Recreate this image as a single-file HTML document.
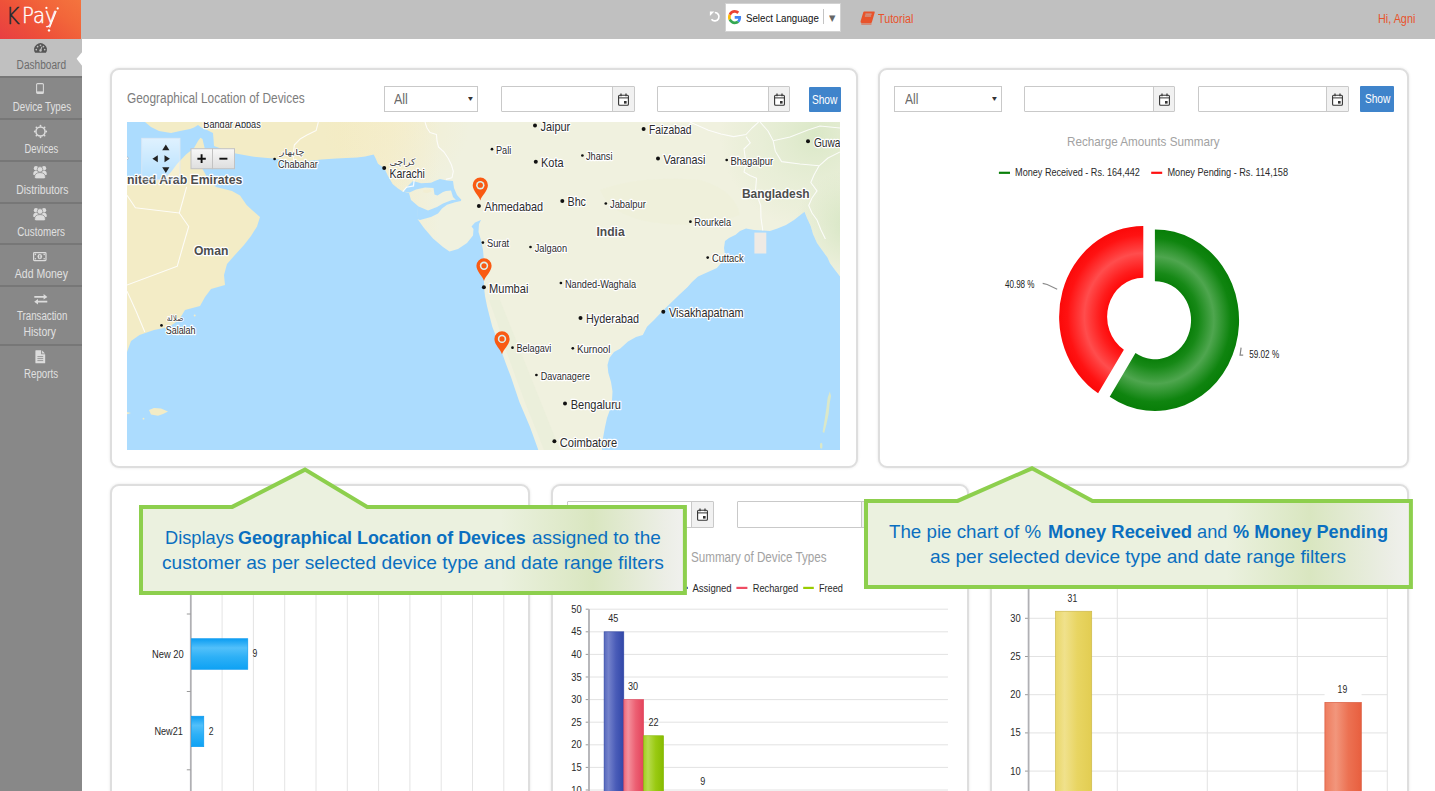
<!DOCTYPE html>
<html lang="en"><head><meta charset="utf-8"><title>KPay Dashboard</title>
<style>
*{box-sizing:border-box}
html,body{margin:0;padding:0}
body{width:1435px;height:791px;overflow:hidden;background:#fff;position:relative;font-family:"Liberation Sans",sans-serif}
.t{position:absolute;white-space:nowrap;display:block}
.abs{position:absolute}
#topbar{position:absolute;left:0;top:0;width:1435px;height:39px;background:#c0c0c0}
#logo{position:absolute;left:0;top:0;width:81px;height:39px;background:linear-gradient(38deg,#e83e42 0%,#ee5139 38%,#f2663a 70%,#f4743e 100%)}
#sidebar{position:absolute;left:0;top:39px;width:81.5px;height:752px;background:#888}
.nav{position:absolute;left:0;width:81.5px;border-top:2px solid #777}
.nav.active{background:#c0c0c0;border:0}
.card{position:absolute;border:2px solid #dedede;border-radius:9px;background:#fff;box-shadow:0 0 3px rgba(0,0,0,.10)}
.inp{position:absolute;height:26px;border:1px solid #c9c9c9;background:#fff;border-radius:1px}
  .inp .cal{position:absolute;right:0;top:0;bottom:0;width:22px;background:#f1f1f1;border-left:1px solid #c9c9c9}
.sel{position:absolute;height:26px;border:1px solid #c9c9c9;background:#fff}
.btn{position:absolute;background:#3f84cb;border-radius:1px}
svg{position:absolute;overflow:visible}
</style></head><body>

<div id="topbar">
<div id="logo">
<span class="t" style='left:5.9px;top:4.77px;font:200 22.6px/22.6px "DejaVu Sans",sans-serif;color:#1d2a31;transform:scaleX(0.918);transform-origin:0 0;-webkit-text-stroke:0.45px #1d2a31;'>K</span>
<span class="t" style='left:22px;top:5.28px;font:200 22px/22px "DejaVu Sans",sans-serif;color:#fff;transform:scaleX(0.897);transform-origin:0 0;-webkit-text-stroke:0.4px #fff;'>Pay</span>
<svg width="81" height="39" viewBox="0 0 81 39"><g fill="#fff"><circle cx="46.4" cy="7.9" r="1.1"/><circle cx="57.7" cy="8.4" r="1.1"/><circle cx="49" cy="30.4" r="1.2"/></g><path d="M56.2 11 L49.6 27.6" stroke="#fff" stroke-width="1.1" fill="none"/></svg>
</div>
<svg style="left:708px;top:10px" width="14" height="14" viewBox="0 0 14 14"><path d="M6.80 2.50 A4.2 4.2 0 1 1 3.49 9.29" fill="none" stroke="#fff" stroke-width="1.7"/><path d="M1.9 1.4 L6.3 1.4 L1.9 5.9 Z" fill="#fff"/></svg>
<div class="abs" style="left:724.9px;top:3.1px;width:116px;height:29px;background:#fff;border:1px solid #d2d2d2">
<svg style="left:1.9px;top:5.9px" width="13.4" height="14.3" viewBox="0 0 48 48" preserveAspectRatio="none"><path fill="#EA4335" d="M24 9.5c3.54 0 6.71 1.22 9.21 3.6l6.85-6.85C35.9 2.38 30.47 0 24 0 14.62 0 6.51 5.38 2.56 13.22l7.98 6.19C12.43 13.72 17.74 9.5 24 9.5z"/><path fill="#4285F4" d="M46.98 24.55c0-1.57-.15-3.09-.38-4.55H24v9.02h12.94c-.58 2.96-2.26 5.48-4.78 7.18l7.73 6c4.51-4.18 7.09-10.36 7.09-17.65z"/><path fill="#FBBC05" d="M10.53 28.59c-.48-1.45-.76-2.99-.76-4.59s.27-3.14.76-4.59l-7.98-6.19C.92 16.46 0 20.12 0 24c0 3.88.92 7.54 2.56 10.78l7.97-6.19z"/><path fill="#34A853" d="M24 48c6.48 0 11.93-2.13 15.89-5.81l-7.73-6c-2.15 1.45-4.92 2.3-8.16 2.3-6.26 0-11.57-4.22-13.47-9.91l-7.98 6.19C6.51 42.62 14.62 48 24 48z"/></svg>
<span class="t" style='left:20.3px;top:8.77px;font:400 11.5px/11.5px "Liberation Sans",sans-serif;color:#111;transform:scaleX(0.843);transform-origin:0 0;'>Select Language</span>
<div class="abs" style="left:97.4px;top:5.4px;width:1px;height:15px;background:#c4c4c4"></div>
<span class="t" style='left:103.3px;top:9.9px;font:400 8.5px/8.5px "DejaVu Sans",sans-serif;color:#666;transform:scaleX(0.979);transform-origin:0 0;'>▼</span>
</div>
<svg style="left:859.5px;top:10.5px" width="15" height="14.5" viewBox="0 0 15 14.5"><g fill="#e8532b"><path d="M4.2 0.6 L14.2 0.6 Q14.9 0.7 14.7 1.5 L11.9 11.2 Q11.7 11.9 10.9 11.9 L1.6 11.9 Q0.2 11.7 0.6 10.2 L3.2 1.4 Q3.5 0.6 4.2 0.6 Z"/><path d="M1.2 12.4 L11.6 12.4 L11.4 13.6 L1.8 13.6 Q0.7 13.4 1.2 12.4 Z"/></g><path d="M5.4 3.1 L11.6 3.1 M4.9 5 L11.1 5" stroke="#c0c0c0" stroke-width="0.9"/></svg>
<span class="t" style='left:878.4px;top:12.82px;font:400 12.5px/12.5px "Liberation Sans",sans-serif;color:#e8532b;transform:scaleX(0.859);transform-origin:0 0;'>Tutorial</span>
<span class="t" style='left:1378.2px;top:12.92px;font:400 12.5px/12.5px "Liberation Sans",sans-serif;color:#e8532b;transform:scaleX(0.866);transform-origin:0 0;'>Hi, Agni</span>
</div>
<div id="sidebar">
<div class="nav active" style="top:0px;height:37.2px"><svg style="left:33.85px;top:4.1px" width="13" height="9.8" viewBox="0 0 13 9.8"><path d="M1.07 9.7 A6.3 6.3 0 1 1 11.93 9.7 Z" fill="#555"/><g fill="#c0c0c0"><circle cx="2.3" cy="6.6" r="0.85"/><circle cx="3.6" cy="3.6" r="0.85"/><circle cx="6.5" cy="2.3" r="0.85"/><circle cx="9.4" cy="3.6" r="0.85"/><circle cx="10.7" cy="6.6" r="0.85"/><path d="M6 7.2 L7.5 3.6 L8.3 3.9 L7.2 7.6 Z"/><circle cx="6.5" cy="7.6" r="1.25"/></g></svg><span class="t" style='left:12.1px;top:19.94px;font:400 12px/12px "Liberation Sans",sans-serif;color:#6c6c6c;transform:scaleX(0.843);transform-origin:50% 0;'>Dashboard</span></div>
<svg style="left:75.5px;top:11.5px" width="7" height="16" viewBox="0 0 7 16"><path d="M7 0 L0.6 7.8 L7 16 Z" fill="#fff"/></svg>
<div class="nav" style="top:37.2px;height:41.8px"><svg style="left:36.1px;top:5px" width="8" height="11" viewBox="0 0 8 11"><rect x="0.6" y="0.6" width="6.8" height="9.8" rx="1" fill="none" stroke="#d9d9d9" stroke-width="1.05"/><rect x="0.8" y="8.4" width="6.4" height="1.8" fill="#d9d9d9"/></svg><span class="t" style='left:5.64px;top:22.54px;font:400 12px/12px "Liberation Sans",sans-serif;color:#e0e0e0;transform:scaleX(0.812);transform-origin:50% 0;'>Device Types</span></div>
<div class="nav" style="top:79px;height:41.8px"><svg style="left:33.9px;top:4.6px" width="13" height="13" viewBox="0 0 13 13"><circle cx="6.5" cy="6.5" r="4.55" fill="none" stroke="#dcdcdc" stroke-width="1.5"/><circle cx="12.25" cy="6.5" r="0.9" fill="#dcdcdc"/><circle cx="10.57" cy="10.57" r="0.9" fill="#dcdcdc"/><circle cx="6.5" cy="12.25" r="0.9" fill="#dcdcdc"/><circle cx="2.43" cy="10.57" r="0.9" fill="#dcdcdc"/><circle cx="0.75" cy="6.5" r="0.9" fill="#dcdcdc"/><circle cx="2.43" cy="2.43" r="0.9" fill="#dcdcdc"/><circle cx="6.5" cy="0.75" r="0.9" fill="#dcdcdc"/><circle cx="10.57" cy="2.43" r="0.9" fill="#dcdcdc"/></svg><span class="t" style='left:20.26px;top:22.74px;font:400 12px/12px "Liberation Sans",sans-serif;color:#e0e0e0;transform:scaleX(0.787);transform-origin:50% 0;'>Devices</span></div>
<div class="nav" style="top:120.8px;height:41.7px"><svg style="left:33.2px;top:3.4px" width="14" height="14" viewBox="0 0 14 14"><g fill="#dcdcdc"><circle cx="3" cy="3.2" r="2.2"/><circle cx="11" cy="3.2" r="2.2"/><path d="M0.2 9.6 Q0 5.8 3 5.8 Q4.8 5.8 5.4 7 L5.4 10 L0.8 10 Z"/><path d="M13.8 9.6 Q14 5.8 11 5.8 Q9.2 5.8 8.6 7 L8.6 10 L13.2 10 Z"/></g><g fill="#dcdcdc" stroke="#888" stroke-width="0.7"><circle cx="7" cy="4.4" r="2.8"/><path d="M1.6 12.6 Q1.4 7.6 7 7.6 Q12.6 7.6 12.4 12.6 Q12.2 13.7 11 13.7 L3 13.7 Q1.8 13.7 1.6 12.6 Z"/></g></svg><span class="t" style='left:11.61px;top:22.64px;font:400 12px/12px "Liberation Sans",sans-serif;color:#e0e0e0;transform:scaleX(0.859);transform-origin:50% 0;'>Distributors</span></div>
<div class="nav" style="top:162.5px;height:41.8px"><svg style="left:32.9px;top:3.5px" width="14" height="14" viewBox="0 0 14 14"><g fill="#dcdcdc"><circle cx="3" cy="3.2" r="2.2"/><circle cx="11" cy="3.2" r="2.2"/><path d="M0.2 9.6 Q0 5.8 3 5.8 Q4.8 5.8 5.4 7 L5.4 10 L0.8 10 Z"/><path d="M13.8 9.6 Q14 5.8 11 5.8 Q9.2 5.8 8.6 7 L8.6 10 L13.2 10 Z"/></g><g fill="#dcdcdc" stroke="#888" stroke-width="0.7"><circle cx="7" cy="4.4" r="2.8"/><path d="M1.6 12.6 Q1.4 7.6 7 7.6 Q12.6 7.6 12.4 12.6 Q12.2 13.7 11 13.7 L3 13.7 Q1.8 13.7 1.6 12.6 Z"/></g></svg><span class="t" style='left:12.14px;top:22.84px;font:400 12px/12px "Liberation Sans",sans-serif;color:#e0e0e0;transform:scaleX(0.822);transform-origin:50% 0;'>Customers</span></div>
<div class="nav" style="top:204.3px;height:41.7px"><svg style="left:33.1px;top:6.9px" width="13.6" height="9.2" viewBox="0 0 13.6 9.2"><rect x="0.6" y="0.6" width="12.4" height="8" rx="0.8" fill="none" stroke="#dcdcdc" stroke-width="1.2"/><ellipse cx="6.8" cy="4.6" rx="2.3" ry="2.6" fill="#dcdcdc"/><rect x="6.3" y="3" width="1" height="3.2" fill="#888"/><circle cx="2.4" cy="2.4" r="0.8" fill="#dcdcdc"/><circle cx="11.2" cy="2.4" r="0.8" fill="#dcdcdc"/><circle cx="2.4" cy="6.8" r="0.8" fill="#dcdcdc"/><circle cx="11.2" cy="6.8" r="0.8" fill="#dcdcdc"/></svg><span class="t" style='left:10.8px;top:22.94px;font:400 12px/12px "Liberation Sans",sans-serif;color:#e0e0e0;transform:scaleX(0.875);transform-origin:50% 0;'>Add Money</span></div>
<div class="nav" style="top:246px;height:58.6px"><svg style="left:33.8px;top:6.6px" width="13.6" height="10.6" viewBox="0 0 13.6 10.6"><g fill="#dcdcdc"><path d="M0.3 2 L9.6 2 L9.6 0 L13.4 2.9 L9.6 5.6 L9.6 3.8 L0.3 3.8 Z"/><path d="M13.3 6.8 L4 6.8 L4 5 L0.2 7.8 L4 10.6 L4 8.6 L13.3 8.6 Z"/></g></svg><span class="t" style='left:10.57px;top:22.94px;font:400 12px/12px "Liberation Sans",sans-serif;color:#e0e0e0;transform:scaleX(0.810);transform-origin:50% 0;'>Transaction</span><span class="t" style='left:21.43px;top:39.14px;font:400 12px/12px "Liberation Sans",sans-serif;color:#e0e0e0;transform:scaleX(0.868);transform-origin:50% 0;'>History</span></div>
<div class="nav" style="top:304.6px;height:42px"><svg style="left:35.2px;top:4px" width="10.6" height="13.6" viewBox="0 0 10.6 13.6"><path d="M0.4 0.8 Q0.4 0.3 0.9 0.3 L6.2 0.3 L6.2 4.2 L10.2 4.2 L10.2 12.8 Q10.2 13.3 9.7 13.3 L0.9 13.3 Q0.4 13.3 0.4 12.8 Z M7.1 0.5 L10 3.4 L7.1 3.4 Z" fill="#dcdcdc"/><path d="M2.4 6.6 L8.2 6.6 M2.4 8.6 L8.2 8.6 M2.4 10.6 L8.2 10.6" stroke="#888" stroke-width="0.8"/></svg><span class="t" style='left:20.39px;top:22.24px;font:400 12px/12px "Liberation Sans",sans-serif;color:#e0e0e0;transform:scaleX(0.809);transform-origin:50% 0;'>Reports</span></div>
</div>
<div class="card" id="card-map" style="left:110px;top:67.5px;width:747.5px;height:400.5px">
<span class="t" style='left:15.2px;top:21.85px;font:400 14px/14px "Liberation Sans",sans-serif;color:#7d7d7d;transform:scaleX(0.849);transform-origin:0 0;'>Geographical Location of Devices</span>
<div class="sel" style="left:271.9px;top:16.5px;width:94.1px;height:25.6px"><span class="t" style='left:8.8px;top:4.95px;font:400 14px/14px "Liberation Sans",sans-serif;color:#6a6a6a;transform:scaleX(0.893);transform-origin:0 0;'>All</span><span class="t" style='left:83px;top:7.83px;font:400 8px/8px "DejaVu Sans",sans-serif;color:#333;transform:scaleX(1.195);transform-origin:0 0;'>▾</span></div>
<div class="inp" style="left:388.7px;top:16.5px;width:134px;height:25.6px"><div class="cal" style="width:21.6px"><svg style="left:5px;top:5.5px" width="11" height="13" viewBox="0 0 11 13"><rect x="0.6" y="2.2" width="9.8" height="10" rx="1" fill="#fff" stroke="#333" stroke-width="1.1"/><path d="M0.6 4.9 L10.4 4.9" stroke="#333" stroke-width="1"/><path d="M3 0.4 L3 3.2 M8 0.4 L8 3.2" stroke="#333" stroke-width="1.2"/><rect x="6" y="8" width="2.6" height="2.6" fill="#333"/></svg></div></div>
<div class="inp" style="left:545.1px;top:16.5px;width:133.1px;height:25.6px"><div class="cal" style="width:21.6px"><svg style="left:5px;top:5.5px" width="11" height="13" viewBox="0 0 11 13"><rect x="0.6" y="2.2" width="9.8" height="10" rx="1" fill="#fff" stroke="#333" stroke-width="1.1"/><path d="M0.6 4.9 L10.4 4.9" stroke="#333" stroke-width="1"/><path d="M3 0.4 L3 3.2 M8 0.4 L8 3.2" stroke="#333" stroke-width="1.2"/><rect x="6" y="8" width="2.6" height="2.6" fill="#333"/></svg></div></div>
<div class="btn" style="left:697px;top:17.7px;width:32px;height:25.1px"><span class="t" style='left:0.37px;top:6.77px;font:400 12.5px/12.5px "Liberation Sans",sans-serif;color:#fff;transform:scaleX(0.815);transform-origin:50% 0;'>Show</span></div>
<svg id="map" style="left:15px;top:52.5px;overflow:hidden" width="713" height="328" viewBox="127 122 713 328"><defs>
<linearGradient id="landg" gradientUnits="userSpaceOnUse" x1="340" y1="0" x2="440" y2="0"><stop offset="0" stop-color="#f3ecc6"/><stop offset="0.5" stop-color="#f3eed0"/><stop offset="1" stop-color="#f0f1df"/></linearGradient>
<radialGradient id="pakg" gradientUnits="userSpaceOnUse" cx="395" cy="120" r="75"><stop offset="0" stop-color="#f7ecc2" stop-opacity=".4"/><stop offset="1" stop-color="#f8e9b8" stop-opacity="0"/></radialGradient>
<radialGradient id="neg" gradientUnits="userSpaceOnUse" cx="815" cy="135" r="95"><stop offset="0" stop-color="#d6e6c2" stop-opacity=".85"/><stop offset="0.6" stop-color="#e0ebcf" stop-opacity=".45"/><stop offset="1" stop-color="#dbe8c6" stop-opacity="0"/></radialGradient>
<radialGradient id="mmg" gradientUnits="userSpaceOnUse" cx="850" cy="225" r="55"><stop offset="0" stop-color="#d3e5c1" stop-opacity=".9"/><stop offset="1" stop-color="#d6e6c2" stop-opacity="0"/></radialGradient>
<linearGradient id="pang" x1="0" y1="0" x2="0" y2="1"><stop offset="0" stop-color="#fff" stop-opacity=".62"/><stop offset="1" stop-color="#fff" stop-opacity=".12"/></linearGradient>
<linearGradient id="zbg" x1="0" y1="0" x2="0" y2="1"><stop offset="0" stop-color="#f8f8f8"/><stop offset="1" stop-color="#dedede"/></linearGradient>
<clipPath id="landclip"><polygon points="145,122 840,122 840,276.5 835,270 830,263.3 827.5,257.6 822,250 817,243 813,234 810.8,226.3 807,218 804.5,211.7 799,216 794,220 786,225 777.4,228.4 770,231 762.8,230.5 754,230 746,228.4 740,231 735.6,234.7 729,238 725,241 724,248 725,255.6 722,262 716.9,268 708,272 698,276.4 692,282 687.6,287 679,295 670,303.8 661.6,312 654,320 647,326.8 642.8,335 636,337 628,341.5 620,348.8 614,352 609.4,358 607.5,365 608.3,372.8 611,382 612.5,391.6 612,400 610.4,408.4 607,418 605,427 603,438 602,450 538.3,450 534,438 530,427 524.5,414 519.4,402 515,389 511,377 506,364 501.7,352 497,339 492.3,326.8 489.5,316 487,306 485,296 484,287 484,280 484.5,271 484,262 483,250 481,240 478.5,232 479,224 481,220 475,222.5 471.5,226.5 473.5,229 473,235.5 467,243 458,249 449.5,251.5 443,247 433,238.5 424,228 417.5,219 418,206 411,200 409,193 402.8,191.6 398,188.5 392.6,184 388,176 384.4,168.2 378,163.8 375.5,158 373.7,154.4 365,156.5 357,157.5 346,158 336,158.6 321.4,159.6 308,161 294.3,161.7 284,160 273.4,158.6 262,157.5 252.4,156.5 244,155 235.7,153.4 225,150 214,146 213.5,139 213,133 207,130 202,128 198,125 194,127.5 190,129 180,131 171,133 165,132 159,131 155,129 151,127 148,124.5"/></clipPath>
</defs><rect x="127" y="122" width="713" height="328" fill="#acdcfe"/><polygon points="127,179 140,180.5 152,181 165,178 171,172 177,164 186,154.5 194,148 198,141 200.4,137.7 202.5,139 204.6,148 203,158 202.5,169 206.7,176.5 216,187 232,191 240,195.4 246.6,205 252,210 260,217 257,226.5 251,236 244,245 234,256 227,264 224,275 225,285 211,289 205,297 200,306 185,310 179,320 169,327 154,330 139.5,335 131,341 127,352" fill="#f3ecc6"/><polygon points="145,122 840,122 840,276.5 835,270 830,263.3 827.5,257.6 822,250 817,243 813,234 810.8,226.3 807,218 804.5,211.7 799,216 794,220 786,225 777.4,228.4 770,231 762.8,230.5 754,230 746,228.4 740,231 735.6,234.7 729,238 725,241 724,248 725,255.6 722,262 716.9,268 708,272 698,276.4 692,282 687.6,287 679,295 670,303.8 661.6,312 654,320 647,326.8 642.8,335 636,337 628,341.5 620,348.8 614,352 609.4,358 607.5,365 608.3,372.8 611,382 612.5,391.6 612,400 610.4,408.4 607,418 605,427 603,438 602,450 538.3,450 534,438 530,427 524.5,414 519.4,402 515,389 511,377 506,364 501.7,352 497,339 492.3,326.8 489.5,316 487,306 485,296 484,287 484,280 484.5,271 484,262 483,250 481,240 478.5,232 479,224 481,220 475,222.5 471.5,226.5 473.5,229 473,235.5 467,243 458,249 449.5,251.5 443,247 433,238.5 424,228 417.5,219 418,206 411,200 409,193 402.8,191.6 398,188.5 392.6,184 388,176 384.4,168.2 378,163.8 375.5,158 373.7,154.4 365,156.5 357,157.5 346,158 336,158.6 321.4,159.6 308,161 294.3,161.7 284,160 273.4,158.6 262,157.5 252.4,156.5 244,155 235.7,153.4 225,150 214,146 213.5,139 213,133 207,130 202,128 198,125 194,127.5 190,129 180,131 171,133 165,132 159,131 155,129 151,127 148,124.5" fill="url(#landg)"/><g clip-path="url(#landclip)"><rect x="300" y="122" width="200" height="110" fill="url(#pakg)"/><rect x="690" y="122" width="150" height="160" fill="url(#neg)"/><rect x="780" y="160" width="60" height="130" fill="url(#mmg)"/><path d="M489 300 L497 322 L506 350 L516 378 L526 405 L537 432 L544 450 L560 450 L548 420 L536 390 L524 360 L512 330 L500 300 Z" fill="#e3ecd4" opacity=".35"/><path d="M600 190 Q640 175 700 180 Q735 190 740 215 Q700 230 650 222 Q610 215 600 190 Z" fill="#eef0d8" opacity=".6"/></g><polygon points="403,191.4 408,186 413,181 421,183.2 431,182.8 436,180.5 440,179 447,180.6 453,181 454,188 457,195 461.5,200 457,201 453,197 451,190.5 446,191 443,192 437.5,195.5 434.5,194.5 433.5,188 425,187.6 416,189.6 409.5,192.4" fill="#acdcfe"/><polygon points="417.5,206 428,210.5 437,207 443,203.5 452,200 461,199.5 461,201 455,202.3 447,204.8 442,208.5 438,213.5 431,217 420,220 417,219" fill="#acdcfe"/><polygon points="423,190.2 430,189.2 432,191.5 427,193 423.5,192.4" fill="#f2eed2"/><polygon points="149,410 154,408 161,408.6 168,411.5 163,414 158,415.7 151,414.6" fill="#f3ecc6"/><polygon points="127,412 131,413 127,414.2" fill="#f3ecc6"/><circle cx="143.5" cy="418.7" r="0.9" fill="#f3ecc6"/><circle cx="194.7" cy="315.4" r="1" fill="#f3ecc6"/><path d="M829.8 391.5 L831 396 L829.6 404 L828.6 414 L826.5 424 L824.2 433 L822.6 432 L824.6 420 L826.4 408 L827.6 398 Z" fill="#dbe8c8"/><ellipse cx="821.2" cy="445.8" rx="1.3" ry="3" fill="#dbe8c8"/><rect x="754.4" y="232.6" width="11.9" height="20.9" fill="#efeae4"/><g stroke="#fff" stroke-width="1.1" fill="none" stroke-linejoin="round" opacity=".85"><polyline points="127,195.2 135.4,207.7 179.3,213 183,200 186.6,186.8"/><polyline points="179.3,213 188.7,226.5 183,246 177.2,266.3 127,285"/><polyline points="127,291.3 136,311 144.8,332"/><polyline points="318.3,122 316.2,130.4 307,135 300.5,138.7 294.3,145 293.2,155.5 293.5,161"/><polyline points="425,122 427,128 430,132.5 436.5,134.5 437,141 438.5,147 444,152 448.3,158.5 451.5,165 453.3,171.4 452,177.7 445.8,179.4"/><polyline points="689.7,122 699,126 708.5,130.3 721,134 733.6,136.6 746,134.5 752,128 758.6,122"/><polyline points="746,136.6 750.3,142.9 744,149 745,156 746,163.7 744,172 750,175.5 756.5,178.3 755.5,190.9 758,198 760.7,205.5 761,218 762.8,230.5"/><polyline points="760,122 768,131 773.2,140.8 775.3,151.2 781.6,161.6 800,164 819.1,165.8 814,175 810.8,182.5 817,190.9 812,198 808.7,205.5 812,213 817,220 821,230 825.4,238.9"/><polyline points="819.1,165.8 828,158 840,152"/><polyline points="773.2,140.8 790,137 808,130 820,126 840,128"/></g><path d="M402.8 191.6 L406.6 187.2 L413.5 185.9 L414.1 180.2" stroke="#fff" stroke-width="1.2" fill="none" opacity=".9"/><circle cx="384.2" cy="168" r="2.0" fill="#111"/><text transform="translate(389.4 178.4) scale(0.833 1)" font-family='"Liberation Sans",sans-serif' font-size="12.6" font-weight="400" fill="#2b2b2b" text-anchor="start" stroke="#fff" stroke-width="2.4" stroke-linejoin="round" paint-order="stroke">Karachi</text><circle cx="535" cy="125.5" r="2.0" fill="#111"/><text transform="translate(540.5 130.87) scale(0.868 1)" font-family='"Liberation Sans",sans-serif' font-size="12.6" font-weight="400" fill="#2b2b2b" text-anchor="start" stroke="#fff" stroke-width="2.4" stroke-linejoin="round" paint-order="stroke">Jaipur</text><circle cx="535.8" cy="161.7" r="2.0" fill="#111"/><text transform="translate(541 167.07) scale(0.872 1)" font-family='"Liberation Sans",sans-serif' font-size="12.6" font-weight="400" fill="#2b2b2b" text-anchor="start" stroke="#fff" stroke-width="2.4" stroke-linejoin="round" paint-order="stroke">Kota</text><circle cx="643.6" cy="128.9" r="2.0" fill="#111"/><text transform="translate(649 134.27) scale(0.818 1)" font-family='"Liberation Sans",sans-serif' font-size="12.6" font-weight="400" fill="#2b2b2b" text-anchor="start" stroke="#fff" stroke-width="2.4" stroke-linejoin="round" paint-order="stroke">Faizabad</text><circle cx="658" cy="158.5" r="2.0" fill="#111"/><text transform="translate(663.6 163.87) scale(0.857 1)" font-family='"Liberation Sans",sans-serif' font-size="12.6" font-weight="400" fill="#2b2b2b" text-anchor="start" stroke="#fff" stroke-width="2.4" stroke-linejoin="round" paint-order="stroke">Varanasi</text><circle cx="808" cy="141.2" r="2.0" fill="#111"/><text transform="translate(813.9 146.57) scale(0.805 1)" font-family='"Liberation Sans",sans-serif' font-size="12.6" font-weight="400" fill="#2b2b2b" text-anchor="start" stroke="#fff" stroke-width="2.4" stroke-linejoin="round" paint-order="stroke">Guwa</text><circle cx="478.9" cy="206" r="2.0" fill="#111"/><text transform="translate(484.5 211.37) scale(0.862 1)" font-family='"Liberation Sans",sans-serif' font-size="12.6" font-weight="400" fill="#2b2b2b" text-anchor="start" stroke="#fff" stroke-width="2.4" stroke-linejoin="round" paint-order="stroke">Ahmedabad</text><circle cx="562.3" cy="201" r="2.0" fill="#111"/><text transform="translate(567.5 206.37) scale(0.852 1)" font-family='"Liberation Sans",sans-serif' font-size="12.6" font-weight="400" fill="#2b2b2b" text-anchor="start" stroke="#fff" stroke-width="2.4" stroke-linejoin="round" paint-order="stroke">Bhc</text><circle cx="483.9" cy="287.3" r="2.0" fill="#111"/><text transform="translate(489 292.67) scale(0.879 1)" font-family='"Liberation Sans",sans-serif' font-size="12.6" font-weight="400" fill="#2b2b2b" text-anchor="start" stroke="#fff" stroke-width="2.4" stroke-linejoin="round" paint-order="stroke">Mumbai</text><circle cx="580.5" cy="318" r="2.0" fill="#111"/><text transform="translate(586 323.37) scale(0.860 1)" font-family='"Liberation Sans",sans-serif' font-size="12.6" font-weight="400" fill="#2b2b2b" text-anchor="start" stroke="#fff" stroke-width="2.4" stroke-linejoin="round" paint-order="stroke">Hyderabad</text><circle cx="663.3" cy="311.8" r="2.0" fill="#111"/><text transform="translate(669 317.17) scale(0.863 1)" font-family='"Liberation Sans",sans-serif' font-size="12.6" font-weight="400" fill="#2b2b2b" text-anchor="start" stroke="#fff" stroke-width="2.4" stroke-linejoin="round" paint-order="stroke">Visakhapatnam</text><circle cx="565" cy="403.5" r="2.0" fill="#111"/><text transform="translate(570.7 408.87) scale(0.876 1)" font-family='"Liberation Sans",sans-serif' font-size="12.6" font-weight="400" fill="#2b2b2b" text-anchor="start" stroke="#fff" stroke-width="2.4" stroke-linejoin="round" paint-order="stroke">Bengaluru</text><circle cx="554.4" cy="441.2" r="2.0" fill="#111"/><text transform="translate(559.8 446.57) scale(0.883 1)" font-family='"Liberation Sans",sans-serif' font-size="12.6" font-weight="400" fill="#2b2b2b" text-anchor="start" stroke="#fff" stroke-width="2.4" stroke-linejoin="round" paint-order="stroke">Coimbatore</text><circle cx="492" cy="149.2" r="1.35" fill="#111"/><text transform="translate(496 153.86) scale(0.866 1)" font-family='"Liberation Sans",sans-serif' font-size="10.6" font-weight="400" fill="#2b2b2b" text-anchor="start" stroke="#fff" stroke-width="2.4" stroke-linejoin="round" paint-order="stroke">Pali</text><circle cx="582.4" cy="155.5" r="1.35" fill="#111"/><text transform="translate(586 160.16) scale(0.865 1)" font-family='"Liberation Sans",sans-serif' font-size="10.6" font-weight="400" fill="#2b2b2b" text-anchor="start" stroke="#fff" stroke-width="2.4" stroke-linejoin="round" paint-order="stroke">Jhansi</text><circle cx="726.7" cy="160" r="1.35" fill="#111"/><text transform="translate(730.4 164.66) scale(0.886 1)" font-family='"Liberation Sans",sans-serif' font-size="10.6" font-weight="400" fill="#2b2b2b" text-anchor="start" stroke="#fff" stroke-width="2.4" stroke-linejoin="round" paint-order="stroke">Bhagalpur</text><circle cx="605.8" cy="203.5" r="1.35" fill="#111"/><text transform="translate(610 208.16) scale(0.883 1)" font-family='"Liberation Sans",sans-serif' font-size="10.6" font-weight="400" fill="#2b2b2b" text-anchor="start" stroke="#fff" stroke-width="2.4" stroke-linejoin="round" paint-order="stroke">Jabalpur</text><circle cx="690.4" cy="221.7" r="1.35" fill="#111"/><text transform="translate(694.3 226.36) scale(0.865 1)" font-family='"Liberation Sans",sans-serif' font-size="10.6" font-weight="400" fill="#2b2b2b" text-anchor="start" stroke="#fff" stroke-width="2.4" stroke-linejoin="round" paint-order="stroke">Rourkela</text><circle cx="707.7" cy="257.6" r="1.35" fill="#111"/><text transform="translate(711.9 262.26) scale(0.882 1)" font-family='"Liberation Sans",sans-serif' font-size="10.6" font-weight="400" fill="#2b2b2b" text-anchor="start" stroke="#fff" stroke-width="2.4" stroke-linejoin="round" paint-order="stroke">Cuttack</text><circle cx="482.9" cy="242.6" r="1.35" fill="#111"/><text transform="translate(487 247.26) scale(0.876 1)" font-family='"Liberation Sans",sans-serif' font-size="10.6" font-weight="400" fill="#2b2b2b" text-anchor="start" stroke="#fff" stroke-width="2.4" stroke-linejoin="round" paint-order="stroke">Surat</text><circle cx="530.5" cy="247" r="1.35" fill="#111"/><text transform="translate(534.7 251.66) scale(0.873 1)" font-family='"Liberation Sans",sans-serif' font-size="10.6" font-weight="400" fill="#2b2b2b" text-anchor="start" stroke="#fff" stroke-width="2.4" stroke-linejoin="round" paint-order="stroke">Jalgaon</text><circle cx="560.9" cy="283" r="1.35" fill="#111"/><text transform="translate(565 287.66) scale(0.866 1)" font-family='"Liberation Sans",sans-serif' font-size="10.6" font-weight="400" fill="#2b2b2b" text-anchor="start" stroke="#fff" stroke-width="2.4" stroke-linejoin="round" paint-order="stroke">Nanded-Waghala</text><circle cx="512.5" cy="347.7" r="1.35" fill="#111"/><text transform="translate(516.5 352.36) scale(0.858 1)" font-family='"Liberation Sans",sans-serif' font-size="10.6" font-weight="400" fill="#2b2b2b" text-anchor="start" stroke="#fff" stroke-width="2.4" stroke-linejoin="round" paint-order="stroke">Belagavi</text><circle cx="572.8" cy="348.3" r="1.35" fill="#111"/><text transform="translate(577 352.96) scale(0.914 1)" font-family='"Liberation Sans",sans-serif' font-size="10.6" font-weight="400" fill="#2b2b2b" text-anchor="start" stroke="#fff" stroke-width="2.4" stroke-linejoin="round" paint-order="stroke">Kurnool</text><circle cx="536.4" cy="375" r="1.35" fill="#111"/><text transform="translate(540.8 379.66) scale(0.852 1)" font-family='"Liberation Sans",sans-serif' font-size="10.6" font-weight="400" fill="#2b2b2b" text-anchor="start" stroke="#fff" stroke-width="2.4" stroke-linejoin="round" paint-order="stroke">Davanagere</text><circle cx="274.6" cy="159" r="1.35" fill="#111"/><text transform="translate(278 167.6) scale(0.853 1)" font-family='"Liberation Sans",sans-serif' font-size="10.6" font-weight="400" fill="#2b2b2b" text-anchor="start" stroke="#fff" stroke-width="2.4" stroke-linejoin="round" paint-order="stroke">Chabahar</text><circle cx="161.5" cy="325.4" r="1.35" fill="#111"/><text transform="translate(165.7 334.1) scale(0.846 1)" font-family='"Liberation Sans",sans-serif' font-size="10.6" font-weight="400" fill="#2b2b2b" text-anchor="start" stroke="#fff" stroke-width="2.4" stroke-linejoin="round" paint-order="stroke">Salalah</text><text transform="translate(203.3 128.4) scale(0.863 1)" font-family='"Liberation Sans",sans-serif' font-size="10.6" font-weight="400" fill="#2b2b2b" text-anchor="start" stroke="#fff" stroke-width="2.4" stroke-linejoin="round" paint-order="stroke">Bandar Abbas</text><text transform="translate(279.6 155.3) scale(1.201 1)" font-family='"DejaVu Sans",sans-serif' font-size="8.5" font-weight="400" fill="#444" text-anchor="start" stroke="#fff" stroke-width="1.6" stroke-linejoin="round" paint-order="stroke">چابهار</text><text transform="translate(389.4 164.6) scale(1.048 1)" font-family='"DejaVu Sans",sans-serif' font-size="9" font-weight="400" fill="#444" text-anchor="start" stroke="#fff" stroke-width="1.6" stroke-linejoin="round" paint-order="stroke">کراچی</text><text transform="translate(166.7 321) scale(0.913 1)" font-family='"DejaVu Sans",sans-serif' font-size="8" font-weight="400" fill="#444" text-anchor="start" stroke="#fff" stroke-width="1.6" stroke-linejoin="round" paint-order="stroke">صلالة</text><text transform="translate(127 184.1) scale(0.902 1)" font-family='"Liberation Sans",sans-serif' font-size="13.6" font-weight="700" fill="#4d4d4d" text-anchor="start" stroke="#fff" stroke-width="2.4" stroke-linejoin="round" paint-order="stroke">nited Arab Emirates</text><text transform="translate(193.9 255.2) scale(0.895 1)" font-family='"Liberation Sans",sans-serif' font-size="13.6" font-weight="700" fill="#4d4d4d" text-anchor="start" stroke="#fff" stroke-width="2.4" stroke-linejoin="round" paint-order="stroke">Oman</text><text transform="translate(596.4 236) scale(0.889 1)" font-family='"Liberation Sans",sans-serif' font-size="13.6" font-weight="700" fill="#4d4d4d" text-anchor="start" stroke="#fff" stroke-width="2.4" stroke-linejoin="round" paint-order="stroke">India</text><text transform="translate(741.9 198.2) scale(0.880 1)" font-family='"Liberation Sans",sans-serif' font-size="13.6" font-weight="700" fill="#4d4d4d" text-anchor="start" stroke="#fff" stroke-width="2.4" stroke-linejoin="round" paint-order="stroke">Bangladesh</text><circle cx="127.2" cy="158.3" r="1.2" fill="#fff" stroke="#999" stroke-width=".5"/><path d="M480.3 200.4 C478.9 195.4 472.7 191 472.7 185.2 A7.6 7.6 0 1 1 487.9 185.2 C487.9 191 481.7 195.4 480.3 200.4 Z" fill="#f95a13"/><circle cx="480.3" cy="185.2" r="4.2" fill="#d9f1ec"/><circle cx="480.3" cy="185.2" r="2.6" fill="#f95a13"/><path d="M484 281 C482.6 276 476.4 271.6 476.4 265.8 A7.6 7.6 0 1 1 491.6 265.8 C491.6 271.6 485.4 276 484 281 Z" fill="#f95a13"/><circle cx="484" cy="265.8" r="4.2" fill="#d9f1ec"/><circle cx="484" cy="265.8" r="2.6" fill="#f95a13"/><path d="M502 354.2 C500.6 349.2 494.4 344.7 494.4 338.9 A7.6 7.6 0 1 1 509.6 338.9 C509.6 344.7 503.4 349.2 502 354.2 Z" fill="#f95a13"/><circle cx="502" cy="338.9" r="4.2" fill="#d9f1ec"/><circle cx="502" cy="338.9" r="2.6" fill="#f95a13"/><rect x="141.7" y="138.3" width="38.3" height="41.4" fill="url(#pang)" stroke="#dfe9f3" stroke-opacity=".8" stroke-width="1"/><g fill="#222"><path d="M165.8 144.4 L169.4 150.2 L162.2 150.2 Z"/><path d="M165.8 173 L169.4 167.2 L162.2 167.2 Z"/><path d="M152.4 158.7 L157.8 155.2 L157.8 162.2 Z"/><path d="M169.9 158.7 L164.5 155.2 L164.5 162.2 Z"/></g><rect x="191" y="148.7" width="21.5" height="20" fill="url(#zbg)" stroke="#c2c2c2" stroke-width="1"/><rect x="212.5" y="148.7" width="22" height="20" fill="url(#zbg)" stroke="#c2c2c2" stroke-width="1"/><path d="M197.4 158.7 L205.8 158.7 M201.6 154.3 L201.6 163.1" stroke="#111" stroke-width="1.9"/><path d="M219.4 158.7 L227.4 158.7" stroke="#111" stroke-width="1.9"/></svg>
</div>
<div class="card" id="card-pie" style="left:877.8px;top:67.5px;width:531.2px;height:400.5px">
<div class="sel" style="left:14.6px;top:16.5px;width:107.5px;height:25.6px"><span class="t" style='left:9.2px;top:4.95px;font:400 14px/14px "Liberation Sans",sans-serif;color:#6a6a6a;transform:scaleX(0.861);transform-origin:0 0;'>All</span><span class="t" style='left:96.6px;top:7.83px;font:400 8px/8px "DejaVu Sans",sans-serif;color:#333;transform:scaleX(1.195);transform-origin:0 0;'>▾</span></div>
<div class="inp" style="left:144.5px;top:16.5px;width:150.8px;height:25.6px"><div class="cal" style="width:21.6px"><svg style="left:5px;top:5.5px" width="11" height="13" viewBox="0 0 11 13"><rect x="0.6" y="2.2" width="9.8" height="10" rx="1" fill="#fff" stroke="#333" stroke-width="1.1"/><path d="M0.6 4.9 L10.4 4.9" stroke="#333" stroke-width="1"/><path d="M3 0.4 L3 3.2 M8 0.4 L8 3.2" stroke="#333" stroke-width="1.2"/><rect x="6" y="8" width="2.6" height="2.6" fill="#333"/></svg></div></div>
<div class="inp" style="left:318.2px;top:16.5px;width:151.1px;height:25.6px"><div class="cal" style="width:22.4px"><svg style="left:5px;top:5.5px" width="11" height="13" viewBox="0 0 11 13"><rect x="0.6" y="2.2" width="9.8" height="10" rx="1" fill="#fff" stroke="#333" stroke-width="1.1"/><path d="M0.6 4.9 L10.4 4.9" stroke="#333" stroke-width="1"/><path d="M3 0.4 L3 3.2 M8 0.4 L8 3.2" stroke="#333" stroke-width="1.2"/><rect x="6" y="8" width="2.6" height="2.6" fill="#333"/></svg></div></div>
<div class="btn" style="left:480.4px;top:16.5px;width:34.2px;height:25.6px"><span class="t" style='left:1.47px;top:7.02px;font:400 12.5px/12.5px "Liberation Sans",sans-serif;color:#fff;transform:scaleX(0.815);transform-origin:50% 0;'>Show</span></div>
<span class="t" style='left:187.1px;top:65.67px;font:400 13.5px/13.5px "Liberation Sans",sans-serif;color:#a2a2a2;transform:scaleX(0.866);transform-origin:0 0;'>Recharge Amounts Summary</span>
<svg style="left:0;top:0" width="527.2" height="396.5" viewBox="879.8 69.5 527.2 396.5"><defs>
<radialGradient id="gG" gradientUnits="userSpaceOnUse" cx="0" cy="0" r="90.8"><stop offset="0.43" stop-color="#0a7f0a"/><stop offset="0.52" stop-color="#178917"/><stop offset="0.70" stop-color="#4fa64f"/><stop offset="0.76" stop-color="#3c9c3c"/><stop offset="0.9" stop-color="#0f840f"/><stop offset="1" stop-color="#087e08"/></radialGradient>
<radialGradient id="gR" gradientUnits="userSpaceOnUse" cx="0" cy="0" r="90.8"><stop offset="0.43" stop-color="#ff0a0a"/><stop offset="0.52" stop-color="#ff1c1c"/><stop offset="0.70" stop-color="#ff4d4d"/><stop offset="0.76" stop-color="#ff3a3a"/><stop offset="0.9" stop-color="#ff1212"/><stop offset="1" stop-color="#fb0909"/></radialGradient>
</defs><g transform="translate(1154.7 319.7) scale(0.927 1)"><path d="M0 -90.8 A90.8 90.8 0 1 1 -48.75 76.6 L-20.94 32.9 A39 39 0 1 0 0 -39 Z" fill="url(#gG)"/></g><g transform="translate(1143.1 316.25) scale(0.927 1)"><path d="M-48.75 76.6 A90.8 90.8 0 0 1 0 -90.8 L0 -39 A39 39 0 0 0 -20.94 32.9 Z" fill="url(#gR)"/></g><path d="M998.7 172.3 L1009.8 172.3" stroke="#0a800a" stroke-width="2.2"/><path d="M1151 172.3 L1162 172.3" stroke="#ff1010" stroke-width="2.2"/><text transform="translate(1014.9 175.8) scale(0.866 1)" font-family='"Liberation Sans",sans-serif' font-size="10.5" font-weight="400" fill="#2a2a2a" text-anchor="start">Money Received - Rs. 164,442</text><text transform="translate(1167.2 175.8) scale(0.875 1)" font-family='"Liberation Sans",sans-serif' font-size="10.5" font-weight="400" fill="#2a2a2a" text-anchor="start">Money Pending - Rs. 114,158</text><text transform="translate(1004.7 287.3) scale(0.794 1)" font-family='"Liberation Sans",sans-serif' font-size="10.2" font-weight="400" fill="#222" text-anchor="start">40.98 %</text><text transform="translate(1249 357.5) scale(0.802 1)" font-family='"Liberation Sans",sans-serif' font-size="10.2" font-weight="400" fill="#222" text-anchor="start">59.02 %</text><path d="M1042.5 282.9 L1047 284 L1057 288.7" stroke="#8a8a8a" stroke-width="1.1" fill="none"/><path d="M1240.9 347.2 L1239.9 354.6 L1243 354.6" stroke="#858585" stroke-width="1.2" fill="none"/></svg>
</div>
<div class="card" id="card-bars-h" style="left:110px;top:484px;width:419.5px;height:316px">
<svg style="left:0;top:0;overflow:hidden" width="415.5" height="312" viewBox="112 486 415.5 312"><defs><linearGradient id="hb" x1="0" y1="0" x2="0" y2="1"><stop offset="0" stop-color="#0c9df2"/><stop offset="0.3" stop-color="#52c0fa"/><stop offset="0.6" stop-color="#2db0f6"/><stop offset="1" stop-color="#0ea2f4"/></linearGradient></defs><path d="M222.1 560 L222.1 800" stroke="#e4e4e4" stroke-width="1"/><path d="M253.4 560 L253.4 800" stroke="#e4e4e4" stroke-width="1"/><path d="M284.7 560 L284.7 800" stroke="#e4e4e4" stroke-width="1"/><path d="M316 560 L316 800" stroke="#e4e4e4" stroke-width="1"/><path d="M347.3 560 L347.3 800" stroke="#e4e4e4" stroke-width="1"/><path d="M378.6 560 L378.6 800" stroke="#e4e4e4" stroke-width="1"/><path d="M409.9 560 L409.9 800" stroke="#e4e4e4" stroke-width="1"/><path d="M441.2 560 L441.2 800" stroke="#e4e4e4" stroke-width="1"/><path d="M472.5 560 L472.5 800" stroke="#e4e4e4" stroke-width="1"/><path d="M503.8 560 L503.8 800" stroke="#e4e4e4" stroke-width="1"/><path d="M190.8 560 L190.8 800" stroke="#b0b0b4" stroke-width="1.8"/><path d="M186.8 614 L190.8 614" stroke="#9a9a9a" stroke-width="1"/><path d="M186.8 691.5 L190.8 691.5" stroke="#9a9a9a" stroke-width="1"/><path d="M186.8 769.8 L190.8 769.8" stroke="#9a9a9a" stroke-width="1"/><rect x="191.3" y="638.7" width="56.5" height="30.6" fill="url(#hb)" stroke="#0a98ee" stroke-width=".6"/><rect x="191.3" y="716.2" width="12.5" height="30.5" fill="url(#hb)" stroke="#0a98ee" stroke-width=".6"/><text transform="translate(183.7 657.9) scale(0.919 1)" font-family='"Liberation Sans",sans-serif' font-size="10.2" font-weight="400" fill="#2a2a2a" text-anchor="end">New 20</text><text transform="translate(182.9 735.4) scale(0.898 1)" font-family='"Liberation Sans",sans-serif' font-size="10.2" font-weight="400" fill="#2a2a2a" text-anchor="end">New21</text><text transform="translate(252.6 657.1) scale(0.838 1)" font-family='"Liberation Sans",sans-serif' font-size="10.3" font-weight="400" fill="#2a2a2a" text-anchor="start">9</text><text transform="translate(208.8 734.9) scale(0.838 1)" font-family='"Liberation Sans",sans-serif' font-size="10.3" font-weight="400" fill="#2a2a2a" text-anchor="start">2</text></svg>
</div>
<div class="card" id="card-cols" style="left:550.6px;top:484px;width:418.6px;height:316px">
<div class="inp" style="left:14.6px;top:15.4px;width:146.8px;height:26.3px"><div class="cal" style="width:21.6px"><svg style="left:5px;top:5.5px" width="11" height="13" viewBox="0 0 11 13"><rect x="0.6" y="2.2" width="9.8" height="10" rx="1" fill="#fff" stroke="#333" stroke-width="1.1"/><path d="M0.6 4.9 L10.4 4.9" stroke="#333" stroke-width="1"/><path d="M3 0.4 L3 3.2 M8 0.4 L8 3.2" stroke="#333" stroke-width="1.2"/><rect x="6" y="8" width="2.6" height="2.6" fill="#333"/></svg></div></div>
<div class="inp" style="left:184.5px;top:15.4px;width:146.9px;height:26.3px"><div class="cal" style="width:21.6px"><svg style="left:5px;top:5.5px" width="11" height="13" viewBox="0 0 11 13"><rect x="0.6" y="2.2" width="9.8" height="10" rx="1" fill="#fff" stroke="#333" stroke-width="1.1"/><path d="M0.6 4.9 L10.4 4.9" stroke="#333" stroke-width="1"/><path d="M3 0.4 L3 3.2 M8 0.4 L8 3.2" stroke="#333" stroke-width="1.2"/><rect x="6" y="8" width="2.6" height="2.6" fill="#333"/></svg></div></div>
<span class="t" style='left:138.7px;top:64.15px;font:400 14px/14px "Liberation Sans",sans-serif;color:#a2a2a2;transform:scaleX(0.831);transform-origin:0 0;'>Summary of Device Types</span>
<svg style="left:0;top:0;overflow:hidden" width="414.6" height="312" viewBox="552.6 486 414.6 312"><defs>
<linearGradient id="cB" x1="0" y1="0" x2="1" y2="0"><stop offset="0" stop-color="#5668bd"/><stop offset="0.22" stop-color="#7482cb"/><stop offset="0.6" stop-color="#4a5cb8"/><stop offset="1" stop-color="#3147a8"/></linearGradient>
<linearGradient id="cR" x1="0" y1="0" x2="1" y2="0"><stop offset="0" stop-color="#ee6b7c"/><stop offset="0.22" stop-color="#f4909c"/><stop offset="0.6" stop-color="#ec6073"/><stop offset="1" stop-color="#e4435b"/></linearGradient>
<linearGradient id="cG" x1="0" y1="0" x2="1" y2="0"><stop offset="0" stop-color="#a2cf1f"/><stop offset="0.22" stop-color="#b7db4d"/><stop offset="0.6" stop-color="#9aca12"/><stop offset="1" stop-color="#86bb00"/></linearGradient>
</defs><path d="M588.5 609.2 L947.6 609.2" stroke="#e2e2e2" stroke-width="1"/><path d="M585.3 609.2 L588.4 609.2" stroke="#9a9a9a" stroke-width="1"/><text transform="translate(581.2 612.8) scale(0.900 1)" font-family='"Liberation Sans",sans-serif' font-size="10.4" font-weight="400" fill="#2a2a2a" text-anchor="end">50</text><path d="M588.5 631.8 L947.6 631.8" stroke="#e2e2e2" stroke-width="1"/><path d="M585.3 631.8 L588.4 631.8" stroke="#9a9a9a" stroke-width="1"/><text transform="translate(581.2 635.4) scale(0.900 1)" font-family='"Liberation Sans",sans-serif' font-size="10.4" font-weight="400" fill="#2a2a2a" text-anchor="end">45</text><path d="M588.5 654.4 L947.6 654.4" stroke="#e2e2e2" stroke-width="1"/><path d="M585.3 654.4 L588.4 654.4" stroke="#9a9a9a" stroke-width="1"/><text transform="translate(581.2 658) scale(0.900 1)" font-family='"Liberation Sans",sans-serif' font-size="10.4" font-weight="400" fill="#2a2a2a" text-anchor="end">40</text><path d="M588.5 677 L947.6 677" stroke="#e2e2e2" stroke-width="1"/><path d="M585.3 677 L588.4 677" stroke="#9a9a9a" stroke-width="1"/><text transform="translate(581.2 680.6) scale(0.900 1)" font-family='"Liberation Sans",sans-serif' font-size="10.4" font-weight="400" fill="#2a2a2a" text-anchor="end">35</text><path d="M588.5 699.6 L947.6 699.6" stroke="#e2e2e2" stroke-width="1"/><path d="M585.3 699.6 L588.4 699.6" stroke="#9a9a9a" stroke-width="1"/><text transform="translate(581.2 703.2) scale(0.900 1)" font-family='"Liberation Sans",sans-serif' font-size="10.4" font-weight="400" fill="#2a2a2a" text-anchor="end">30</text><path d="M588.5 722.2 L947.6 722.2" stroke="#e2e2e2" stroke-width="1"/><path d="M585.3 722.2 L588.4 722.2" stroke="#9a9a9a" stroke-width="1"/><text transform="translate(581.2 725.8) scale(0.900 1)" font-family='"Liberation Sans",sans-serif' font-size="10.4" font-weight="400" fill="#2a2a2a" text-anchor="end">25</text><path d="M588.5 744.8 L947.6 744.8" stroke="#e2e2e2" stroke-width="1"/><path d="M585.3 744.8 L588.4 744.8" stroke="#9a9a9a" stroke-width="1"/><text transform="translate(581.2 748.4) scale(0.900 1)" font-family='"Liberation Sans",sans-serif' font-size="10.4" font-weight="400" fill="#2a2a2a" text-anchor="end">20</text><path d="M588.5 767.4 L947.6 767.4" stroke="#e2e2e2" stroke-width="1"/><path d="M585.3 767.4 L588.4 767.4" stroke="#9a9a9a" stroke-width="1"/><text transform="translate(581.2 771) scale(0.900 1)" font-family='"Liberation Sans",sans-serif' font-size="10.4" font-weight="400" fill="#2a2a2a" text-anchor="end">15</text><path d="M588.5 790 L947.6 790" stroke="#e2e2e2" stroke-width="1"/><path d="M585.3 790 L588.4 790" stroke="#9a9a9a" stroke-width="1"/><text transform="translate(581.2 793.6) scale(0.900 1)" font-family='"Liberation Sans",sans-serif' font-size="10.4" font-weight="400" fill="#2a2a2a" text-anchor="end">10</text><path d="M588.5 812.6 L947.6 812.6" stroke="#e2e2e2" stroke-width="1"/><path d="M585.3 812.6 L588.4 812.6" stroke="#9a9a9a" stroke-width="1"/><text transform="translate(581.2 816.2) scale(0.900 1)" font-family='"Liberation Sans",sans-serif' font-size="10.4" font-weight="400" fill="#2a2a2a" text-anchor="end">5</text><path d="M588.5 835.2 L947.6 835.2" stroke="#e2e2e2" stroke-width="1"/><path d="M585.3 835.2 L588.4 835.2" stroke="#9a9a9a" stroke-width="1"/><text transform="translate(581.2 838.8) scale(0.900 1)" font-family='"Liberation Sans",sans-serif' font-size="10.4" font-weight="400" fill="#2a2a2a" text-anchor="end">0</text><path d="M588.6 609.2 L588.6 840" stroke="#b0b0b4" stroke-width="1.8"/><rect x="603.7" y="631.8" width="19.7" height="300" fill="url(#cB)" stroke="#2f44a2" stroke-width=".6"/><rect x="623.4" y="699.6" width="19.8" height="300" fill="url(#cR)" stroke="#df3f57" stroke-width=".6"/><rect x="643.2" y="735.76" width="20" height="300" fill="url(#cG)" stroke="#82b600" stroke-width=".6"/><text transform="translate(612.9 622.2) scale(0.880 1)" font-family='"Liberation Sans",sans-serif' font-size="10.3" font-weight="400" fill="#2a2a2a" text-anchor="middle">45</text><text transform="translate(632.7 690.3) scale(0.880 1)" font-family='"Liberation Sans",sans-serif' font-size="10.3" font-weight="400" fill="#2a2a2a" text-anchor="middle">30</text><text transform="translate(653.1 726.4) scale(0.880 1)" font-family='"Liberation Sans",sans-serif' font-size="10.3" font-weight="400" fill="#2a2a2a" text-anchor="middle">22</text><text transform="translate(702.4 785.3) scale(0.880 1)" font-family='"Liberation Sans",sans-serif' font-size="10.3" font-weight="400" fill="#2a2a2a" text-anchor="middle">9</text><path d="M676 587.9 L687.5 587.9" stroke="#3f51b5" stroke-width="2.2"/><path d="M736 587.9 L747 587.9" stroke="#ef4c63" stroke-width="2.2"/><path d="M802.8 587.9 L813.4 587.9" stroke="#99cc00" stroke-width="2.2"/><text transform="translate(692 591.7) scale(0.885 1)" font-family='"Liberation Sans",sans-serif' font-size="10.8" font-weight="400" fill="#2a2a2a" text-anchor="start">Assigned</text><text transform="translate(752.3 591.7) scale(0.861 1)" font-family='"Liberation Sans",sans-serif' font-size="10.8" font-weight="400" fill="#2a2a2a" text-anchor="start">Recharged</text><text transform="translate(818.5 591.7) scale(0.854 1)" font-family='"Liberation Sans",sans-serif' font-size="10.8" font-weight="400" fill="#2a2a2a" text-anchor="start">Freed</text></svg>
</div>
<div class="card" id="card-cols2" style="left:989.6px;top:484px;width:419.8px;height:316px">
<svg style="left:0;top:0;overflow:hidden" width="415.8" height="312" viewBox="991.6 486 415.8 312"><defs>
<linearGradient id="cY" x1="0" y1="0" x2="1" y2="0"><stop offset="0" stop-color="#e9d768"/><stop offset="0.25" stop-color="#f0e18c"/><stop offset="0.6" stop-color="#e8d562"/><stop offset="1" stop-color="#e2cd52"/></linearGradient>
<linearGradient id="cO" x1="0" y1="0" x2="1" y2="0"><stop offset="0" stop-color="#ee7c5e"/><stop offset="0.3" stop-color="#f2967c"/><stop offset="0.65" stop-color="#ec7152"/><stop offset="1" stop-color="#e85f3f"/></linearGradient>
</defs><path d="M1028 580.1 L1386.9 580.1" stroke="#e2e2e2" stroke-width="1"/><path d="M1024.6 580.1 L1028 580.1" stroke="#9a9a9a" stroke-width="1"/><text transform="translate(1020.2 583.7) scale(0.900 1)" font-family='"Liberation Sans",sans-serif' font-size="10.4" font-weight="400" fill="#2a2a2a" text-anchor="end">35</text><path d="M1028 618.3 L1386.9 618.3" stroke="#e2e2e2" stroke-width="1"/><path d="M1024.6 618.3 L1028 618.3" stroke="#9a9a9a" stroke-width="1"/><text transform="translate(1020.2 621.9) scale(0.900 1)" font-family='"Liberation Sans",sans-serif' font-size="10.4" font-weight="400" fill="#2a2a2a" text-anchor="end">30</text><path d="M1028 656.5 L1386.9 656.5" stroke="#e2e2e2" stroke-width="1"/><path d="M1024.6 656.5 L1028 656.5" stroke="#9a9a9a" stroke-width="1"/><text transform="translate(1020.2 660.1) scale(0.900 1)" font-family='"Liberation Sans",sans-serif' font-size="10.4" font-weight="400" fill="#2a2a2a" text-anchor="end">25</text><path d="M1028 694.7 L1386.9 694.7" stroke="#e2e2e2" stroke-width="1"/><path d="M1024.6 694.7 L1028 694.7" stroke="#9a9a9a" stroke-width="1"/><text transform="translate(1020.2 698.3) scale(0.900 1)" font-family='"Liberation Sans",sans-serif' font-size="10.4" font-weight="400" fill="#2a2a2a" text-anchor="end">20</text><path d="M1028 732.9 L1386.9 732.9" stroke="#e2e2e2" stroke-width="1"/><path d="M1024.6 732.9 L1028 732.9" stroke="#9a9a9a" stroke-width="1"/><text transform="translate(1020.2 736.5) scale(0.900 1)" font-family='"Liberation Sans",sans-serif' font-size="10.4" font-weight="400" fill="#2a2a2a" text-anchor="end">15</text><path d="M1028 771.1 L1386.9 771.1" stroke="#e2e2e2" stroke-width="1"/><path d="M1024.6 771.1 L1028 771.1" stroke="#9a9a9a" stroke-width="1"/><text transform="translate(1020.2 774.7) scale(0.900 1)" font-family='"Liberation Sans",sans-serif' font-size="10.4" font-weight="400" fill="#2a2a2a" text-anchor="end">10</text><path d="M1028 809.3 L1386.9 809.3" stroke="#e2e2e2" stroke-width="1"/><path d="M1024.6 809.3 L1028 809.3" stroke="#9a9a9a" stroke-width="1"/><text transform="translate(1020.2 812.9) scale(0.900 1)" font-family='"Liberation Sans",sans-serif' font-size="10.4" font-weight="400" fill="#2a2a2a" text-anchor="end">5</text><path d="M1116.9 560 L1116.9 800" stroke="#e2e2e2" stroke-width="1"/><path d="M1206.9 560 L1206.9 800" stroke="#e2e2e2" stroke-width="1"/><path d="M1296.9 560 L1296.9 800" stroke="#e2e2e2" stroke-width="1"/><path d="M1386.9 560 L1386.9 800" stroke="#e2e2e2" stroke-width="1"/><path d="M1028.2 560 L1028.2 800" stroke="#b0b0b4" stroke-width="1.8"/><rect x="1055.2" y="611.26" width="36.1" height="300" fill="url(#cY)" stroke="#cdb84a" stroke-width=".7"/><rect x="1324.5" y="702.54" width="36.4" height="300" fill="url(#cO)" stroke="#d9573a" stroke-width=".7"/><text transform="translate(1072 601.9) scale(0.840 1)" font-family='"Liberation Sans",sans-serif' font-size="10.3" font-weight="400" fill="#2a2a2a" text-anchor="middle">31</text><rect x="1324.2" y="682" width="37" height="14" fill="#fff"/><text transform="translate(1342 692.8) scale(0.840 1)" font-family='"Liberation Sans",sans-serif' font-size="10.3" font-weight="400" fill="#2a2a2a" text-anchor="middle">19</text></svg>
</div>
<div class="abs" id="callout-map" style="left:0;top:0;width:1435px;height:791px;pointer-events:none"><svg style="left:0;top:0" width="1435" height="791" viewBox="0 0 1435 791"><defs><linearGradient id="callout-mapg" gradientUnits="userSpaceOnUse" x1="139" y1="0" x2="686.9" y2="0"><stop offset="0" stop-color="#ebf1df"/><stop offset="0.660" stop-color="#ebf1df"/><stop offset="0.828" stop-color="#d9e6c0"/><stop offset="0.960" stop-color="#eceee6"/><stop offset="1" stop-color="#f1f1ef"/></linearGradient></defs><path d="M141 506.9 L232.2 506.9 L305 469.6 L367.2 506.9 L684.9 506.9 L684.9 592.9 L141 592.9 Z" fill="url(#callout-mapg)" stroke="#8dcf4d" stroke-width="4.0" stroke-linejoin="miter"/></svg><span class="t" style='left:164.8px;top:529.46px;font:400 18.6px/18.6px "Liberation Sans",sans-serif;color:#0a6fc0;transform:scaleX(0.982);transform-origin:0 0;'>Displays</span><span class="t" style='left:238.4px;top:529.46px;font:700 18.6px/18.6px "Liberation Sans",sans-serif;color:#0a6fc0;transform:scaleX(0.960);transform-origin:0 0;'>Geographical Location of Devices</span><span class="t" style='left:531.7px;top:529.46px;font:400 18.6px/18.6px "Liberation Sans",sans-serif;color:#0a6fc0;transform:scaleX(1.021);transform-origin:0 0;'>assigned to the</span><span class="t" style='left:161.7px;top:553.96px;font:400 18.6px/18.6px "Liberation Sans",sans-serif;color:#0a6fc0;transform:scaleX(1.031);transform-origin:0 0;'>customer as per selected device type and date range filters</span></div>
<div class="abs" id="callout-pie" style="left:0;top:0;width:1435px;height:791px;pointer-events:none"><svg style="left:0;top:0" width="1435" height="791" viewBox="0 0 1435 791"><defs><linearGradient id="callout-pieg" gradientUnits="userSpaceOnUse" x1="864" y1="0" x2="1412.9" y2="0"><stop offset="0" stop-color="#ebf1df"/><stop offset="0.660" stop-color="#ebf1df"/><stop offset="0.812" stop-color="#d9e6c0"/><stop offset="0.960" stop-color="#eceee6"/><stop offset="1" stop-color="#f1f1ef"/></linearGradient></defs><path d="M866 500.9 L957.6 500.9 L1032 468.3 L1092.5 500.9 L1410.9 500.9 L1410.9 586.9 L866 586.9 Z" fill="url(#callout-pieg)" stroke="#8dcf4d" stroke-width="4.0" stroke-linejoin="miter"/></svg><span class="t" style='left:889px;top:523.06px;font:400 18.6px/18.6px "Liberation Sans",sans-serif;color:#0a6fc0;transform:scaleX(1.008);transform-origin:0 0;'>The pie chart of %</span><span class="t" style='left:1047.8px;top:523.06px;font:700 18.6px/18.6px "Liberation Sans",sans-serif;color:#0a6fc0;transform:scaleX(0.989);transform-origin:0 0;'>Money Received</span><span class="t" style='left:1196.8px;top:523.06px;font:400 18.6px/18.6px "Liberation Sans",sans-serif;color:#0a6fc0;transform:scaleX(0.980);transform-origin:0 0;'>and</span><span class="t" style='left:1233.2px;top:523.06px;font:700 18.6px/18.6px "Liberation Sans",sans-serif;color:#0a6fc0;transform:scaleX(0.974);transform-origin:0 0;'>% Money Pending</span><span class="t" style='left:930.3px;top:548.06px;font:400 18.6px/18.6px "Liberation Sans",sans-serif;color:#0a6fc0;transform:scaleX(1.027);transform-origin:0 0;'>as per selected device type and date range filters</span></div>
</body></html>
